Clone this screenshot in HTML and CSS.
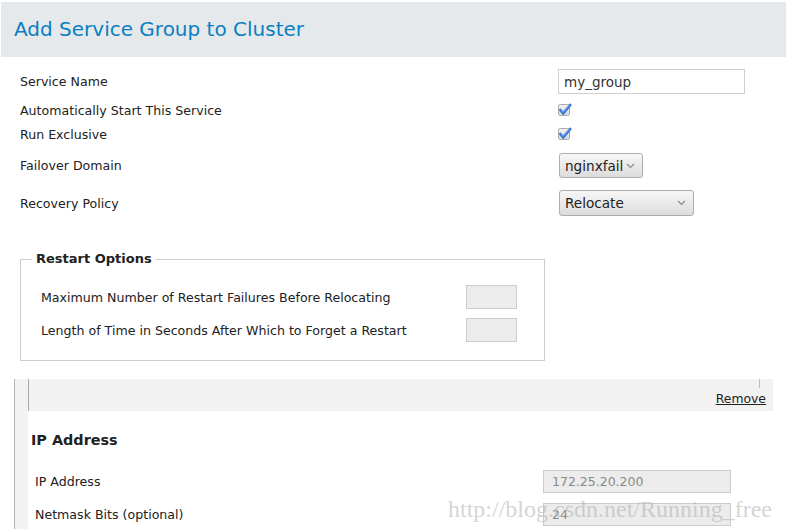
FILE: index.html
```html
<!DOCTYPE html>
<html>
<head>
<meta charset="utf-8">
<link rel="stylesheet" href="styles.css">
</head>
<body>
<div class="header"><h1 class="title">Add Service Group to Cluster</h1></div>

<div class="form">
  <div class="row r1">
    <div class="label">Service Name</div>
    <input class="text-input" type="text" value="my_group">
  </div>
  <div class="row r2">
    <div class="label">Automatically Start This Service</div>
    <span class="check"><svg width="14" height="14" viewBox="0 0 14 14"><defs><linearGradient id="cb" x1="0" y1="0" x2="0" y2="1"><stop offset="0" stop-color="#f4f4f4"/><stop offset="1" stop-color="#d6d6d6"/></linearGradient></defs><rect x="0.5" y="1.5" width="11" height="11" rx="2" fill="url(#cb)" stroke="#a8a8a8"/><path d="M2.4 7 L5.2 10.4 L12.2 2" fill="none" stroke="#2f6fd0" stroke-width="2.6" stroke-linecap="round" stroke-linejoin="round"/><path d="M3 7 L5.2 9.6 L11.6 2.2" fill="none" stroke="#8bb8f2" stroke-width="0.8" stroke-linecap="round"/></svg></span>
  </div>
  <div class="row r3">
    <div class="label">Run Exclusive</div>
    <span class="check"><svg width="14" height="14" viewBox="0 0 14 14"><rect x="0.5" y="1.5" width="11" height="11" rx="2" fill="url(#cb)" stroke="#a8a8a8"/><path d="M2.4 7 L5.2 10.4 L12.2 2" fill="none" stroke="#2f6fd0" stroke-width="2.6" stroke-linecap="round" stroke-linejoin="round"/><path d="M3 7 L5.2 9.6 L11.6 2.2" fill="none" stroke="#8bb8f2" stroke-width="0.8" stroke-linecap="round"/></svg></span>
  </div>
  <div class="row r4">
    <div class="label">Failover Domain</div>
    <div class="select sel-small"><span>nginxfail</span><svg class="chev" width="9" height="6" viewBox="0 0 9 6"><path d="M1 1 L4.5 4.5 L8 1" fill="none" stroke="#8a8a8a" stroke-width="1.2"/></svg></div>
  </div>
  <div class="row r5">
    <div class="label">Recovery Policy</div>
    <div class="select sel-wide"><span>Relocate</span><svg class="chev" width="9" height="6" viewBox="0 0 9 6"><path d="M1 1 L4.5 4.5 L8 1" fill="none" stroke="#8a8a8a" stroke-width="1.2"/></svg></div>
  </div>
</div>

<fieldset class="restart">
  <legend class="legend">Restart Options</legend>
  <div class="frow">
    <div class="flabel">Maximum Number of Restart Failures Before Relocating</div>
    <input class="small-input" type="text">
  </div>
  <div class="frow">
    <div class="flabel">Length of Time in Seconds After Which to Forget a Restart</div>
    <input class="small-input" type="text">
  </div>
</fieldset>

<div class="lower">
  <div class="lower-inner">
    <div class="band">
      <div class="band-line"></div>
      <div class="band-actions"><a class="remove" href="#">Remove</a></div>
    </div>
    <h2 class="section-title">IP Address</h2>
    <div class="irow">
      <div class="ilabel">IP Address</div>
      <input class="ip-input" type="text" value="172.25.20.200" disabled>
    </div>
    <div class="irow">
      <div class="ilabel">Netmask Bits (optional)</div>
      <input class="ip-input" type="text" value="24" disabled>
    </div>
  </div>
</div>

<div class="watermark">http://blog.csdn.net/Running_free</div>
</body>
</html>
```

FILE: styles.css
```css
html, body {
  margin: 0;
  padding: 0;
  overflow: hidden;
  background: #ffffff;
}
body {
  font-family: "DejaVu Sans", Verdana, sans-serif;
  color: #222;
  position: relative;
  height: 529px;
}
.header {
  margin: 2px 3px 0 1px;
  height: 55px;
  background: #e6e9ec;
  display: flex;
  align-items: center;
  padding-left: 13px;
}
.title {
  margin: 0 0 2px 0;
  font-size: 20px;
  font-weight: normal;
  color: #0a7fc2;
  line-height: 24px;
}
.form {
  padding: 9px 0 0 20px;
}
.row {
  display: flex;
  align-items: center;
}
.label {
  width: 538px;
  font-size: 12.6px;
  color: #222;
}
.r1 { height: 31px; }
.r2 { height: 24px; margin-top: 1px; }
.r3 { height: 24px; }
.r4 { height: 31px; margin-top: 4px; }
.r5 { height: 32px; margin-top: 6px; }
.text-input {
  box-sizing: border-box;
  width: 187px;
  height: 25px;
  border: 1px solid #cfcfcf;
  padding: 0 5px;
  font-family: "DejaVu Sans", sans-serif;
  font-size: 13.5px;
  color: #333;
  margin: 0;
  outline: none;
}
.check {
  display: flex;
}
.select {
  box-sizing: border-box;
  height: 25px;
  margin-left: 1px;
  border: 1px solid #adadad;
  border-radius: 3px;
  background: linear-gradient(#f7f7f7, #dcdcdc);
  display: flex;
  align-items: center;
  justify-content: space-between;
  padding: 0 7px 0 5px;
  font-size: 13.6px;
  color: #222;
}
.sel-small { width: 84px; }
.sel-wide { width: 135px; height: 26px; padding-right: 7px; }
.chev { flex: none; }

.restart {
  margin: 32px 0 0 20px;
  width: 525px;
  box-sizing: border-box;
  border: 1px solid #cdcdcd;
  padding: 18px 0 18px 20px;
}
.legend {
  font-size: 13px;
  font-weight: bold;
  line-height: 16px;
  padding: 0 4px;
  margin-left: -9px;
  color: #222;
}
.frow {
  display: flex;
  align-items: center;
  height: 24px;
}
.frow + .frow {
  margin-top: 9px;
}
.flabel {
  width: 425px;
  font-size: 12.6px;
}
.small-input {
  box-sizing: border-box;
  width: 51px;
  height: 24px;
  margin: 0;
  border: 1px solid #cccccc;
  background: #ececec;
  outline: none;
}

.lower {
  margin: 18px 16px 0 14px;
  border-left: 1px solid #b4b4b4;
  padding-left: 13px;
  background: #f2f2f2;
  height: 160px;
}
.lower-inner {
  background: #ffffff;
  height: 100%;
}
.band {
  background: #f2f2f2;
  border-left: 1px solid #a9a9a9;
  height: 32px;
}
.band-line {
  height: 9px;
  margin-right: 13px;
  border-right: 1px solid #bdbdbd;
}
.band-actions {
  display: flex;
  justify-content: flex-end;
  padding-right: 7px;
  margin-top: 3px;
}
.remove {
  font-size: 12.4px;
  color: #222;
  text-decoration: underline;
}
.section-title {
  margin: 20px 0 0 3px;
  font-size: 14.4px;
  font-weight: bold;
  line-height: 18px;
  color: #222;
}
.irow {
  display: flex;
  align-items: center;
  height: 23px;
  padding-left: 7px;
}
.section-title + .irow {
  margin-top: 21px;
}
.irow + .irow {
  margin-top: 10px;
}
.ilabel {
  width: 508px;
  font-size: 12.6px;
}
.ip-input {
  box-sizing: border-box;
  width: 188px;
  height: 23px;
  margin: 0;
  border: 1px solid #cccccc;
  background: #ececec;
  padding: 0 8px;
  font-family: "DejaVu Sans", sans-serif;
  font-size: 12.5px;
  color: #8a8a8a;
  outline: none;
}
.watermark {
  position: absolute;
  left: 448px;
  top: 495px;
  font-family: "Liberation Serif", serif;
  font-size: 24px;
  line-height: 28px;
  color: rgba(175, 175, 175, 0.55);
  white-space: nowrap;
  pointer-events: none;
}
```
